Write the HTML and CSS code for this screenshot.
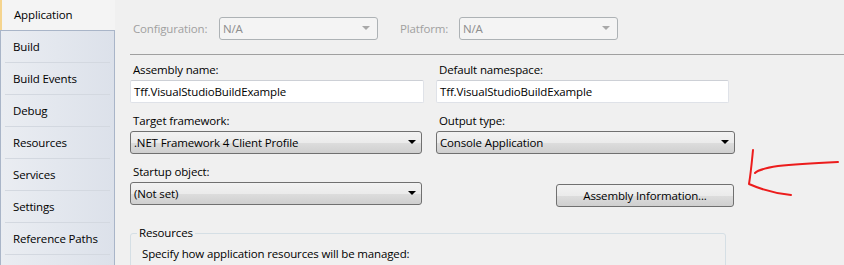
FILE: index.html
```html
<!DOCTYPE html>
<html lang="en">
<head>
    <meta charset="UTF-8">
    <title>Application Properties</title>
    <link rel="stylesheet" href="styles.css">
</head>
<body>
    <div class="designer">
        <!-- Property page tabs -->
        <nav class="tabs">
            <div class="tab tab-active">Application</div>
            <div class="tab-list">
                <div class="tab">Build</div>
                <div class="tab">Build Events</div>
                <div class="tab">Debug</div>
                <div class="tab">Resources</div>
                <div class="tab">Services</div>
                <div class="tab">Settings</div>
                <div class="tab">Reference Paths</div>
            </div>
        </nav>

        <main class="page">
            <div class="config-bar">
                <span class="config-label config-label-first">Configuration:</span>
                <div class="combo combo-disabled combo-config">N/A<span class="arrow"></span></div>
                <span class="config-label config-label-platform">Platform:</span>
                <div class="combo combo-disabled combo-config">N/A<span class="arrow"></span></div>
            </div>

            <div class="form-grid">
                <div class="field">
                    <div class="field-label">Assembly name:</div>
                    <div class="textbox">Tff.VisualStudioBuildExample</div>
                </div>
                <div class="field">
                    <div class="field-label">Default namespace:</div>
                    <div class="textbox textbox-right">Tff.VisualStudioBuildExample</div>
                </div>
                <div class="field">
                    <div class="field-label">Target framework:</div>
                    <div class="combo combo-left">.NET Framework 4 Client Profile<span class="arrow"></span></div>
                </div>
                <div class="field">
                    <div class="field-label">Output type:</div>
                    <div class="combo">Console Application<span class="arrow"></span></div>
                </div>
                <div class="field">
                    <div class="field-label">Startup object:</div>
                    <div class="combo combo-left">(Not set)<span class="arrow"></span></div>
                </div>
                <div class="field field-button">
                    <button class="btn">Assembly Information...</button>
                </div>
            </div>

            <fieldset class="group">
                <legend>Resources</legend>
                <p>Specify how application resources will be managed:</p>
            </fieldset>
        </main>
    </div>

    <!-- Hand drawn annotation -->
    <svg class="annotation" width="844" height="265" viewBox="0 0 844 265">
        <path d="M838,162 C815,163 795,164 778,166 C765,168 758,170 755,173" />
        <path d="M753,150 C752,160 751,172 749,184 C758,188 772,193 791,195" />
    </svg>
</body>
</html>
```

FILE: styles.css
```css
/* General */
body {
    margin: 0;
    background-color: #f0f0f0;
    font-family: 'Segoe UI', 'Open Sans', sans-serif;
    font-size: 11.5px;
    letter-spacing: -0.15px;
    color: #000;
    overflow: hidden;
}

.designer {
    display: flex;
    height: 265px;
}

/* Tabs */
.tabs {
    width: 115px;
    flex-shrink: 0;
    display: flex;
    flex-direction: column;
}

.tab {
    height: 32px;
    line-height: 31px;
    padding-left: 12px;
    position: relative;
}

.tab-list .tab::after {
    content: '';
    position: absolute;
    left: 4px;
    right: 4px;
    bottom: 0;
    height: 1px;
    background-color: #d3d8e0;
}

.tab-active {
    height: 30px;
    line-height: 29px;
    padding-left: 12px;
    border-left: 2px solid #f5d48e;
    background-color: #f4f4f4;
}

.tab-list {
    flex: 1;
    border: 1px solid #a9b5c8;
    border-bottom: none;
    background: linear-gradient(to right, #eaedf2, #dce1ea);
}

/* Page */
.page {
    flex: 1;
}

.config-bar {
    display: flex;
    align-items: center;
    margin-left: 15px;
    padding: 17px 0 14px 3px;
    border-bottom: 1px solid #a0a0a0;
}

.config-label {
    color: #a0a0a0;
}

.config-label-first {
    width: 86px;
}

.config-label-platform {
    width: 59px;
    margin-left: 22px;
}

.form-grid {
    display: grid;
    grid-template-columns: 294px 299px;
    column-gap: 12px;
    row-gap: 10px;
    margin-left: 15px;
    padding-top: 7px;
}

.field-label {
    line-height: 16px;
    padding-left: 3px;
    margin-bottom: 2px;
}

.textbox {
    height: 23px;
    line-height: 21px;
    box-sizing: border-box;
    padding-left: 3px;
    background-color: #fff;
    border: 1px solid #dfe2e8;
    border-top-color: #cdd0d6;
    border-radius: 2px;
}

.textbox-right {
    width: 293px;
}

/* Combo boxes */
.combo {
    height: 23px;
    box-sizing: border-box;
    display: flex;
    align-items: center;
    justify-content: space-between;
    padding: 0 5px 1px 3px;
    border: 1px solid #707070;
    border-radius: 3px;
    background: linear-gradient(#f2f2f2 0%, #ebebeb 50%, #dddddd 51%, #cfcfcf 100%);
}

.combo-left {
    width: 292px;
}

.combo .arrow {
    width: 0;
    height: 0;
    border-left: 4px solid transparent;
    border-right: 4px solid transparent;
    border-top: 4px solid #000;
}

.combo-disabled {
    color: #8d8d8d;
    border-color: #adb2b5;
    background: #f4f4f4;
}

.combo-config {
    width: 159px;
    padding-right: 7px;
}

.combo-disabled .arrow {
    border-top: 4px solid #a8a8a8;
}

/* Button */
.field-button {
    display: flex;
    justify-content: flex-end;
    align-items: flex-start;
    padding-top: 20px;
}

.btn {
    width: 178px;
    height: 23px;
    margin-right: 1px;
    font-family: inherit;
    font-size: 11.5px;
    letter-spacing: -0.15px;
    color: #000;
    padding: 0 0 1px;
    border: 1px solid #707070;
    border-radius: 3px;
    background: linear-gradient(#f2f2f2 0%, #ebebeb 50%, #dddddd 51%, #cfcfcf 100%);
}

/* Resources group */
.group {
    width: 596px;
    box-sizing: border-box;
    margin: 18px 0 0 15px;
    padding: 0 6px 10px;
    border: 1px solid #d5dfe5;
    border-radius: 3px;
}

.group legend {
    padding: 0 2px;
    line-height: 16px;
}

.group p {
    margin: 5px 0 0 5px;
    line-height: 16px;
}

/* Annotation */
.annotation {
    position: absolute;
    left: 0;
    top: 0;
    pointer-events: none;
}

.annotation path {
    fill: none;
    stroke: #ec1c1c;
    stroke-width: 2;
    stroke-linecap: round;
    stroke-linejoin: round;
}
```
